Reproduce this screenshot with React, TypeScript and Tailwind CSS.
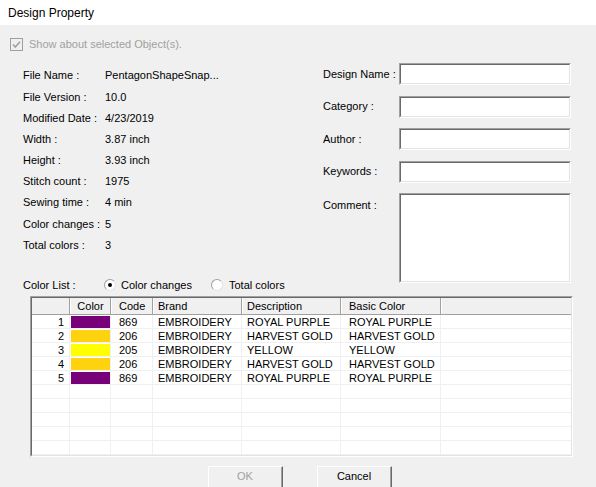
import React from 'react';

type ColorRow = { n: number; color: string; code: string; brand: string; desc: string; basic: string };

const rows: ColorRow[] = [
  { n: 1, color: '#780078', code: '869', brand: 'EMBROIDERY', desc: 'ROYAL PURPLE', basic: 'ROYAL PURPLE' },
  { n: 2, color: '#ffd20f', code: '206', brand: 'EMBROIDERY', desc: 'HARVEST GOLD', basic: 'HARVEST GOLD' },
  { n: 3, color: '#ffff00', code: '205', brand: 'EMBROIDERY', desc: 'YELLOW', basic: 'YELLOW' },
  { n: 4, color: '#ffd20f', code: '206', brand: 'EMBROIDERY', desc: 'HARVEST GOLD', basic: 'HARVEST GOLD' },
  { n: 5, color: '#780078', code: '869', brand: 'EMBROIDERY', desc: 'ROYAL PURPLE', basic: 'ROYAL PURPLE' },
];

const info: [string, string][] = [
  ['File Name :', 'PentagonShapeSnap...'],
  ['File Version :', '10.0'],
  ['Modified Date :', '4/23/2019'],
  ['Width :', '3.87 inch'],
  ['Height :', '3.93 inch'],
  ['Stitch count :', '1975'],
  ['Sewing time :', '4 min'],
  ['Color changes :', '5'],
  ['Total colors :', '3'],
];

// sunken 3D edit box
const Sunken: React.FC<{ className?: string; children?: React.ReactNode }> = ({ className = '', children }) => (
  <div className={`border border-t-[#a0a0a0] border-l-[#a0a0a0] border-r-white border-b-white ${className}`}>
    <div className="h-full w-full border border-t-[#696969] border-l-[#696969] border-r-[#e3e3e3] border-b-[#e3e3e3] bg-white">
      {children}
    </div>
  </div>
);

const Radio: React.FC<{ checked?: boolean }> = ({ checked }) => (
  <span className="flex h-[12px] w-[12px] items-center justify-center rounded-full border border-t-[#a0a0a0] border-l-[#a0a0a0] border-r-[#e3e3e3] border-b-[#e3e3e3] bg-white">
    {checked && <span className="h-[4px] w-[4px] rounded-full bg-black" />}
  </span>
);

const Button: React.FC<{ label: string; disabled?: boolean; className?: string }> = ({ label, disabled, className = '' }) => (
  <div className={`h-[23px] w-[75px] border border-t-white border-l-white border-r-[#696969] border-b-[#696969] ${className}`}>
    <div className="flex h-full w-full items-center justify-center border-r border-b border-r-[#a0a0a0] border-b-[#a0a0a0] bg-[#f0f0f0] pb-[1px]">
      <span className={disabled ? 'text-[#a0a0a0]' : 'text-black'}>{label}</span>
    </div>
  </div>
);

export default function App() {
  const empty = Array.from({ length: 5 });
  return (
    <div className="h-[487px] w-[596px] overflow-hidden bg-[#f0f0f0] font-['Liberation_Sans',Arial,sans-serif] text-[11px] text-black">
      {/* title bar */}
      <div className="flex h-[25px] items-center bg-white pl-[8px] text-[12px]">Design Property</div>

      {/* disabled checkbox */}
      <div className="mt-[13px] flex h-[13px] items-center pl-[10px]">
        <svg width="13" height="13" viewBox="0 0 13 13">
          <rect x="0.5" y="0.5" width="12" height="12" fill="#f0f0f0" stroke="#a0a0a0" />
          <path d="M3 6.5 L5.3 9 L10 3.8" fill="none" stroke="#a0a0a0" strokeWidth="1.6" />
        </svg>
        <span className="ml-[6px] text-[#a0a0a0]">Show about selected Object(s).</span>
      </div>

      {/* properties */}
      <div className="mt-[12px] flex h-[233px]">
        <div className="w-[323px] pl-[23px] pt-[2px]">
          {info.map(([label, value]) => (
            <div key={label} className="flex h-[21.2px] items-center">
              <span className="w-[82px]">{label}</span>
              <span>{value}</span>
            </div>
          ))}
          <div className="mt-[18.6px] flex h-[21.2px] items-center">
            <span className="w-[81px]">Color List :</span>
            <Radio checked />
            <span className="ml-[5px] w-[90px]">Color changes</span>
            <Radio />
            <span className="ml-[6px]">Total colors</span>
          </div>
        </div>
        <div className="flex flex-col">
          {['Design Name :', 'Category :', 'Author :', 'Keywords :'].map((label, i) => (
            <div key={label} className={`flex h-[22px] items-center ${i > 0 ? 'mt-[10.5px]' : ''}`}>
              <span className="w-[76px]">{label}</span>
              <Sunken className="h-[22px] w-[172px]" />
            </div>
          ))}
          <div className="mt-[10.5px] flex">
            <span className="w-[76px] pt-[4px]">Comment :</span>
            <Sunken className="h-[90px] w-[172px]" />
          </div>
        </div>
      </div>

      {/* color list */}
      <div className="ml-[30px] h-[161px] w-[543px] border border-t-[#a0a0a0] border-l-[#a0a0a0] border-r-white border-b-white">
        <div className="h-full w-full overflow-hidden border border-t-[#696969] border-l-[#696969] border-r-[#e3e3e3] border-b-[#e3e3e3] bg-white">
          <div className="flex h-[17px] border-b border-b-[#a0a0a0] bg-[#f0f0f0] leading-[17px]">
            <div className="w-[38px] border-r border-r-[#a0a0a0]" />
            <div className="w-[41px] border-r border-l border-r-[#a0a0a0] border-l-white text-center">Color</div>
            <div className="w-[42px] border-r border-l border-r-[#a0a0a0] border-l-white pl-[7px]">Code</div>
            <div className="w-[89px] border-r border-l border-r-[#a0a0a0] border-l-white pl-[4px]">Brand</div>
            <div className="w-[99px] border-r border-l border-r-[#a0a0a0] border-l-white pl-[4px]">Description</div>
            <div className="w-[100px] border-r border-l border-r-[#a0a0a0] border-l-white pl-[7px]">Basic Color</div>
            <div className="flex-1 border-l border-l-white" />
          </div>
          {rows.map((r) => (
            <div key={r.n} className="flex h-[14px] border-b border-b-[#f0f0f0] leading-[15px]">
              <div className="w-[38px] border-r border-r-[#f0f0f0] pr-[5px] text-right">{r.n}</div>
              <div className="w-[41px] border-r border-r-[#f0f0f0] pl-[1px] pt-[1px]">
                <div className="h-[12px] w-[39px]" style={{ backgroundColor: r.color }} />
              </div>
              <div className="w-[42px] border-r border-r-[#f0f0f0] pl-[8px]">{r.code}</div>
              <div className="w-[89px] border-r border-r-[#f0f0f0] pl-[5px]">{r.brand}</div>
              <div className="w-[99px] border-r border-r-[#f0f0f0] pl-[5px]">{r.desc}</div>
              <div className="w-[100px] border-r border-r-[#f0f0f0] pl-[8px]">{r.basic}</div>
              <div className="flex-1" />
            </div>
          ))}
          {empty.map((_, i) => (
            <div key={i} className="flex h-[14px] border-b border-b-[#f0f0f0]">
              <div className="w-[38px] border-r border-r-[#f0f0f0]" />
              <div className="w-[41px] border-r border-r-[#f0f0f0]" />
              <div className="w-[42px] border-r border-r-[#f0f0f0]" />
              <div className="w-[89px] border-r border-r-[#f0f0f0]" />
              <div className="w-[99px] border-r border-r-[#f0f0f0]" />
              <div className="w-[100px] border-r border-r-[#f0f0f0]" />
              <div className="flex-1" />
            </div>
          ))}
        </div>
      </div>

      {/* buttons */}
      <div className="mt-[9px] flex">
        <Button label="OK" disabled className="ml-[208px]" />
        <Button label="Cancel" className="ml-[34px]" />
      </div>
    </div>
  );
}
